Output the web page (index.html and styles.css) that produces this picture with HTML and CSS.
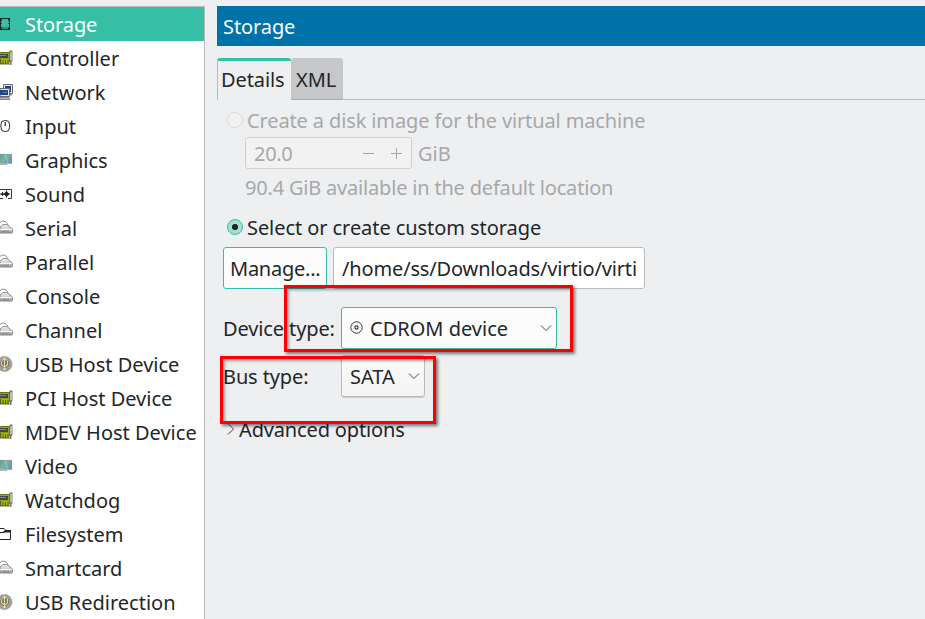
FILE: index.html
```html
<!DOCTYPE html>
<html lang="en">
<head>
<meta charset="utf-8">
<title>Add New Virtual Hardware</title>
<link rel="stylesheet" href="styles.css">
</head>
<body>
<svg class="defs" width="0" height="0" aria-hidden="true">
  <defs>
    <linearGradient id="screen" x1="0" y1="0" x2="1" y2="0.600"><stop offset="0" stop-color="#5796ad"/><stop offset=".5" stop-color="#7db59a"/><stop offset="1" stop-color="#6690c8"/></linearGradient>
    <linearGradient id="metal" x1="0" y1="0" x2="0" y2="1"><stop offset="0" stop-color="#f0f0ee"/><stop offset="1" stop-color="#a9a9a6"/></linearGradient>
    <symbol id="disk" viewBox="0 0 13 16"><path d="M0 2.500h10M0 13.500h10" fill="none" stroke="#232629"/><path d="M.5 3v10M9.500 3v10" stroke="#232629"/><path d="M1 3h1v2H1zM8 3h1v2H8zM1 7h1v1H1zM8 7h1v1H8zM1 11h1v2H1zM8 11h1v2H8zM2 11.500h6v.8H2z" fill="#232629" opacity=".75"/></symbol>
    <symbol id="card" viewBox="0 0 13 16"><path d="M0 2h10v10H0z" fill="#96a512"/><path d="M0 2.500h9.500M9.500 2v10" fill="none" stroke="#69770f"/><path d="M0 4h8v4H0z" fill="#3f4a4e"/><path d="M0 5.500h6" stroke="#7e8b90"/><path d="M0 8.500h9" stroke="#8c9b12"/><path d="M1 9h8v5H1z" fill="#a8b40f"/><path d="M.5 9v5M3 10v4M5.500 10v4M8 10v4M0 14h9" fill="none" stroke="#4b550c" stroke-width=".9"/><path d="M9.500 1.500h3M11.500 1v9.500l-1 1V15" fill="none" stroke="#777a74" stroke-width="2"/><path d="M11.500 2v8" stroke="#c5c6c0" stroke-width=".9"/></symbol>
    <symbol id="network" viewBox="0 0 13 16"><path d="M3.500.5h9v9h-9z" fill="#e8e8e2" stroke="#696b66"/><path d="M5 2h6v6H5z" fill="#1c4585"/><path d="M8 10h4v1.500H8z" fill="#93948e"/><path d="M0 4.500h9.500v8H0z" fill="#e8e8e2" stroke="#696b66"/><path d="M0 6h8v5H0z" fill="#1c4585"/><path d="M1 9 7 7v2z" fill="#4c78b5"/><path d="M0 13.500h9l1 2H0z" fill="#b4b5ae" stroke="#777871" stroke-width=".8"/></symbol>
    <symbol id="mouse" viewBox="0 0 13 16"><rect x="1" y="2.500" width="8.500" height="11" rx="3.800" fill="none" stroke="#232629"/><path d="M5.250 4v4" stroke="#232629" stroke-width="1.200"/></symbol>
    <symbol id="monitor" viewBox="0 0 13 16"><path d="M0 2h12v9.500H0z" fill="url(#screen)"/><path d="m4 2 3 9h2L6 2z" fill="#a6c6a0" opacity=".6"/><path d="M0 2.300h11.700v9.200H0" fill="none" stroke="#929a9c" stroke-width=".6"/><path d="M0 12.500h7" stroke="#b2b5b5"/></symbol>
    <symbol id="sound" viewBox="0 0 13 16"><path d="M0 3.500h11.500v9H8M0 12.500h3" fill="none" stroke="#34373a"/><path d="M0 8h10M2.500 6v4M6.500 4.500v7" stroke="#232629"/><path d="M6.500 5 9.500 8l-3 3-3-3zM1 8l1.500-1.500L4 8 2.500 9.500z" fill="#232629"/></symbol>
    <symbol id="serial" viewBox="0 0 13 16"><path d="M0 2.500c3-3 8-1 8 4" fill="none" stroke="#8d8e8c"/><path d="m0 7 3-2.500h4L12.500 9v3.500H0z" fill="url(#metal)" stroke="#8a8b89" stroke-width=".9"/><path d="M3 6h3l3 2.500H1z" fill="#dededc"/><path d="M0 9.500h12" stroke="#f9f9f7"/><path d="M2 11.500h7" stroke="#7795bd" stroke-width="1.400"/><path d="M0 13.500h12" stroke="#c1c1bf"/></symbol>
    <symbol id="usb" viewBox="0 0 13 16"><circle cx="4.500" cy="8" r="7.500" fill="#a0a19c" stroke="#8b8c86" stroke-width=".6"/><path d="M4.500 2v12M1.500 6v3l3 2 3-2V5" fill="none" stroke="#5e5c43" stroke-width="2.400"/><path d="M4.500 2v12M1.500 6v3l3 2 3-2V5M3 4l1.500-2L6 4" fill="none" stroke="#e9dc96" stroke-width="1.200"/><circle cx="4.500" cy="13" r="1.400" fill="#e9dc96"/></symbol>
    <symbol id="folder" viewBox="0 0 13 16"><path d="M0 2.500h4l2 2h4.500v9H0" fill="none" stroke="#232629"/><path d="M0 6h3l2-2h6v2.500H5L4 7H0z" fill="#232629"/></symbol>
  </defs>
</svg>
<div class="window">
  <ul class="sidebar">
    <li class="item selected"><svg class="icon"><use href="#disk"/></svg>Storage</li>
    <li class="item"><svg class="icon"><use href="#card"/></svg>Controller</li>
    <li class="item"><svg class="icon"><use href="#network"/></svg>Network</li>
    <li class="item"><svg class="icon"><use href="#mouse"/></svg>Input</li>
    <li class="item"><svg class="icon"><use href="#monitor"/></svg>Graphics</li>
    <li class="item"><svg class="icon"><use href="#sound"/></svg>Sound</li>
    <li class="item"><svg class="icon"><use href="#serial"/></svg>Serial</li>
    <li class="item"><svg class="icon"><use href="#serial"/></svg>Parallel</li>
    <li class="item"><svg class="icon"><use href="#serial"/></svg>Console</li>
    <li class="item"><svg class="icon"><use href="#serial"/></svg>Channel</li>
    <li class="item"><svg class="icon"><use href="#usb"/></svg>USB Host Device</li>
    <li class="item"><svg class="icon"><use href="#card"/></svg>PCI Host Device</li>
    <li class="item"><svg class="icon"><use href="#card"/></svg>MDEV Host Device</li>
    <li class="item"><svg class="icon"><use href="#monitor"/></svg>Video</li>
    <li class="item"><svg class="icon"><use href="#card"/></svg>Watchdog</li>
    <li class="item"><svg class="icon"><use href="#folder"/></svg>Filesystem</li>
    <li class="item"><svg class="icon"><use href="#serial"/></svg>Smartcard</li>
    <li class="item"><svg class="icon"><use href="#usb"/></svg>USB Redirection</li>
  </ul>
  <main class="main">
    <h1 class="title">Storage</h1>
    <div class="tabs"><div class="tab active">Details</div><div class="tab">XML</div></div>
    <div class="panel">
      <div class="row create disabled"><span class="radio"></span>Create a disk image for the virtual machine</div>
      <div class="row size disabled">
        <div class="spin"><span class="value">20.0</span><svg width="42" height="14" viewBox="0 0 42 14"><path d="M0 7.500h11M28 7.500h11M33.500 2v11" fill="none" stroke="#a3a5a6"/></svg></div><span class="unit">GiB</span>
      </div>
      <div class="row available disabled">90.4 GiB available in the default location</div>
      <div class="row select"><span class="radio checked"></span>Select or create custom storage</div>
      <div class="row path"><div class="button">Manage...</div><div class="entry">/home/ss/Downloads/virtio/virti</div></div>
      <div class="row device"><span class="label">Device type:</span>
        <div class="combo focus"><svg class="disc" width="13" height="13" viewBox="0 0 13 13"><g fill="none" stroke="#34373a"><circle cx="6.500" cy="6.500" r="5.700"/><circle cx="6.500" cy="6.500" r="1.600" stroke-width="1.200"/></g></svg><span>CDROM device</span><svg class="arrow" width="12" height="8" viewBox="0 0 12 8"><path d="m1 1.500 5 5 5-5" fill="none" stroke="#45484a"/></svg></div>
      </div>
      <div class="row bus"><span class="label">Bus type:</span>
        <div class="combo"><span>SATA</span><svg class="arrow" width="12" height="8" viewBox="0 0 12 8"><path d="m1 1.500 5 5 5-5" fill="none" stroke="#45484a"/></svg></div>
      </div>
      <div class="row advanced"><svg width="8" height="12" viewBox="0 0 8 12"><path d="m1 .5 5.500 5.500L1 11.500" fill="none" stroke="#45484a"/></svg>Advanced options</div>
    </div>
  </main>
  <div class="highlight highlight-device"></div>
  <div class="highlight highlight-bus"></div>
</div>
</body>
</html>
```
FILE: styles.css
```css
* { box-sizing: border-box; }
body { margin: 0; background: #eeeff1; color: #232629; font: 20px/26px "Noto Sans", sans-serif; }
.defs { display: block; height: 0; }
.window { position: relative; display: flex; gap: 12px; width: 925px; height: 619px; padding-top: 6px; overflow: hidden; white-space: nowrap; }
.sidebar { flex: none; width: 205px; margin: 0; padding: 0; list-style: none; background: #fff; border: 1px solid #b9bbbd; border-left: 0; border-bottom: 0; }
.item { display: flex; align-items: center; gap: 12px; height: 34px; padding-top: 2px; }
.item.selected { background: #37bfa5; color: #fff; letter-spacing: -.1px; }
.icon { flex: none; width: 13px; height: 16px; margin-top: -2px; }
.main { flex: 1; min-width: 0; }
.title { height: 40px; margin: 0; padding: 8px 6px 0; background: #0072aa; color: #fcfcfc; font-size: 20px; font-weight: 400; line-height: 26px; letter-spacing: -.1px; }
.tabs { display: flex; height: 42px; margin-top: 12px; }
.tabs::after { content: ""; flex: 1; border-bottom: 1px solid #b9bbbd; }
.tab { width: 52px; padding: 9px 0 0 5px; border-bottom: 1px solid #a9abac; border-radius: 3px 3px 0 0; background: #c6c7c9; }
.tab.active { width: 74px; padding: 6px 3px 0; border: solid #b9bbbd; border-width: 3px 0 0 1px; border-top-color: #37bfa5; background: #eeeff1; letter-spacing: -.1px; }
.panel { display: flex; flex-direction: column; padding: 4px 0 0 6px; }
.row { display: flex; align-items: center; }
.disabled { color: #a6a8aa; }
.radio { width: 16px; height: 16px; margin: -2px 4px 0 4px; border: 1px solid #dadbdc; border-radius: 50%; background: #f2f2f3; }
.radio.checked { border-color: #37bfa5; background: radial-gradient(circle, #232629 0 2.8px, #a8ddd3 3.4px); }
.create { height: 34px; letter-spacing: -.125px; }
.size { height: 32px; gap: 6px; padding-left: 22px; margin-top: -1px; }
.unit { padding-top: 2px; }
.spin { display: flex; align-items: center; justify-content: space-between; width: 167px; height: 32px; padding: 2px 6px 0 8px; border: 1px solid #cfd0d1; border-radius: 3px; background: #f2f2f2; letter-spacing: -.3px; }
.spin svg { margin-top: -2px; }
.available { height: 38px; padding-left: 22px; letter-spacing: -.19px; }
.select { height: 40px; padding-top: 2px; letter-spacing: -.07px; }
.path { height: 42px; gap: 6px; }
.button, .entry { height: 42px; padding-top: 8px; border: 1px solid #b9bbbd; border-radius: 3px; }
.button { width: 104px; padding-left: 6px; border-color: #37bfa5; background: #fcfcfc; letter-spacing: -.25px; }
.entry { width: 312px; padding-left: 8px; background: #fff; letter-spacing: -.15px; }
.device { height: 42px; margin-top: 18px; }
.bus { height: 42px; margin-top: 6px; }
.label { width: 118px; padding-top: 1px; letter-spacing: -.12px; }
.combo { display: flex; align-items: center; width: 84px; height: 42px; padding: 1px 4px 0 8px; border: 1px solid #b9bbbd; border-radius: 3px; background: linear-gradient(#fcfcfc, #f3f3f3); box-shadow: 0 1px 0 #c9cacb; }
.combo.focus { width: 216px; border-color: #37bfa5; background: #fcfcfc; box-shadow: none; }
.disc { margin: -3px 7px 0 0; }
.arrow { margin: -1px 0 0 auto; }
.advanced { height: 34px; gap: 4px; padding: 2px 0 0 4px; margin-top: 15px; letter-spacing: -.15px; }
.advanced svg { margin-top: -2px; }
.highlight { position: absolute; border: 3px solid #f00; box-shadow: 2px 2px 3px rgba(0, 0, 0, .5), inset 2px 2px 3px rgba(0, 0, 0, .35); }
.highlight-device { left: 284px; top: 285px; width: 289px; height: 67px; }
.highlight-bus { left: 220px; top: 356px; width: 216px; height: 68px; }
```
